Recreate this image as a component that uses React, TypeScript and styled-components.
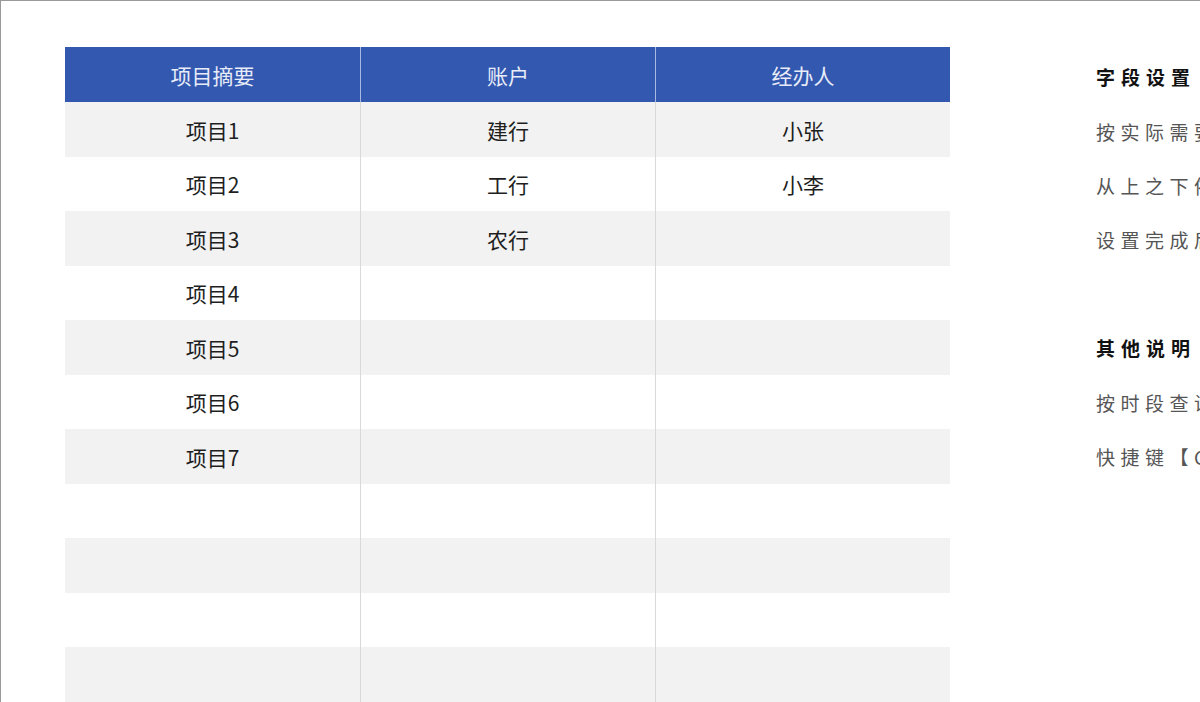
import React from "react";
import styled, { createGlobalStyle } from "styled-components";

const Global = createGlobalStyle`
  html, body { margin: 0; padding: 0; background: #fff; overflow: hidden; }
  body { font-family: "Noto Sans CJK SC", "Noto Sans", sans-serif; }
`;

const Frame = styled.div`
  width: 1200px;
  height: 702px;
  box-sizing: border-box;
  border-top: 1px solid #9a9a9a;
  border-left: 1px solid #9a9a9a;
  display: flex;
  align-items: flex-start;
  padding: 46px 0 0 64px;
  overflow: hidden;
`;

const Table = styled.div`
  width: 885px;
  flex: none;
  display: flex;
  flex-direction: column;
`;

const HeaderRow = styled.div`
  display: grid;
  grid-template-columns: 295px 295px 295px;
  height: 55px;
  background: #3358b0;
`;

const HeadCell = styled.div<{ $divider?: boolean }>`
  display: flex;
  align-items: center;
  justify-content: center;
  color: #e8ecf8;
  font-size: 21px;
  box-sizing: border-box;
  border-left: ${(p) => (p.$divider ? "1px solid #a9b9e2" : "none")};
`;

const Row = styled.div<{ $shade: boolean; $h: number }>`
  display: grid;
  grid-template-columns: 295px 295px 295px;
  height: ${(p) => p.$h}px;
  background: ${(p) => (p.$shade ? "#f2f2f2" : "#ffffff")};
`;

const Cell = styled.div<{ $divider?: boolean }>`
  display: flex;
  align-items: center;
  justify-content: center;
  color: #1e1e1e;
  font-size: 21px;
  box-sizing: border-box;
  border-left: ${(p) => (p.$divider ? "1px solid #d9d9d9" : "none")};
`;

const Panel = styled.div`
  margin-left: 146px;
  padding-top: 2px;
  display: flex;
  flex-direction: column;
  white-space: nowrap;
`;

const Title = styled.div`
  height: 55px;
  display: flex;
  align-items: center;
  font-size: 19px;
  font-weight: 700;
  letter-spacing: 6px;
  color: #111;
`;

const Line = styled.div`
  height: 54px;
  display: flex;
  align-items: center;
  font-size: 19px;
  letter-spacing: 5.5px;
  color: #555;
`;

const Spacer = styled.div`
  height: 54px;
`;

const rows: [string, string, string][] = [
  ["项目1", "建行", "小张"],
  ["项目2", "工行", "小李"],
  ["项目3", "农行", ""],
  ["项目4", "", ""],
  ["项目5", "", ""],
  ["项目6", "", ""],
  ["项目7", "", ""],
  ["", "", ""],
  ["", "", ""],
  ["", "", ""],
  ["", "", ""],
];

export default function App() {
  return (
    <>
      <Global />
      <Frame>
        <Table>
          <HeaderRow>
            <HeadCell>项目摘要</HeadCell>
            <HeadCell $divider>账户</HeadCell>
            <HeadCell $divider>经办人</HeadCell>
          </HeaderRow>
          {rows.map((r, i) => (
            <Row key={i} $shade={i % 2 === 0} $h={i % 2 === 0 ? 55 : 54}>
              <Cell>{r[0]}</Cell>
              <Cell $divider>{r[1]}</Cell>
              <Cell $divider>{r[2]}</Cell>
            </Row>
          ))}
        </Table>
        <Panel>
          <Title>字段设置</Title>
          <Line>按实际需要修改表头字段名称</Line>
          <Line>从上之下依次填写各项内容</Line>
          <Line>设置完成后即可自动生成报表</Line>
          <Spacer />
          <Title>其他说明</Title>
          <Line>按时段查询汇总数据</Line>
          <Line>快捷键【Ctrl+F】查找</Line>
        </Panel>
      </Frame>
    </>
  );
}
